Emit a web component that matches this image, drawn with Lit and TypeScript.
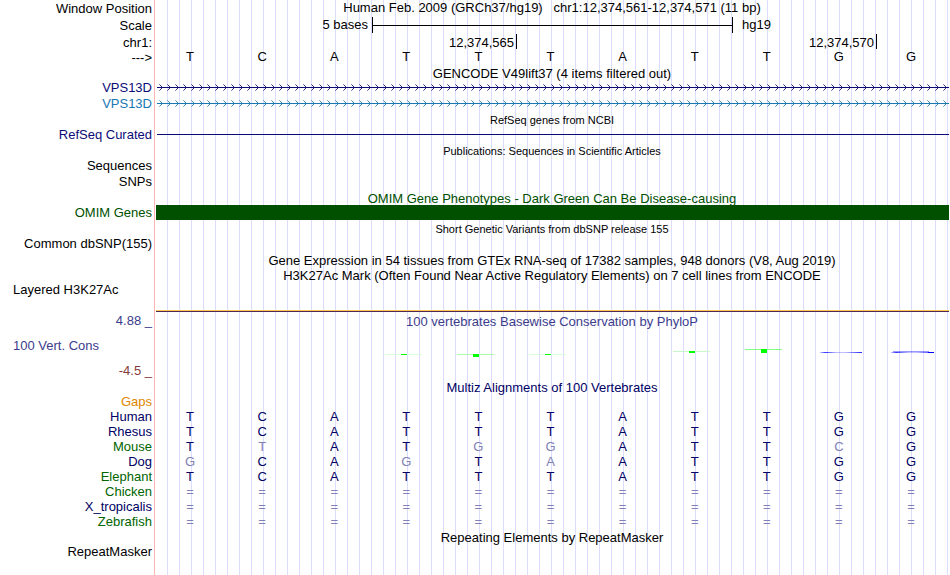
import { LitElement, html, svg, css, nothing, TemplateResult } from "lit";
import { customElement } from "lit/decorators.js";
import { classMap } from "lit/directives/class-map.js";

type Tone = "black" | "navy" | "sky" | "green" | "leaf" | "blue" | "maroon" | "orange" | "ink";

interface Species {
  name: string;
  tone: Tone;
  bases: string;
}

const HUMAN = "TCATTTATTGG";

const SPECIES: Species[] = [
  { name: "Human", tone: "ink", bases: HUMAN },
  { name: "Rhesus", tone: "ink", bases: HUMAN },
  { name: "Mouse", tone: "leaf", bases: "TTATGGATTCG" },
  { name: "Dog", tone: "ink", bases: "GCAGTAATTGG" },
  { name: "Elephant", tone: "leaf", bases: HUMAN },
  { name: "Chicken", tone: "leaf", bases: "===========" },
  { name: "X_tropicalis", tone: "ink", bases: "===========" },
  { name: "Zebrafish", tone: "leaf", bases: "===========" },
];

@customElement("app-root")
export class AppRoot extends LitElement {
  static styles = css`
    :host {
      display: block;
      font: 13px/15px "Liberation Sans", Arial, sans-serif;
      color: #000;
    }
    .browser {
      box-sizing: border-box;
      min-height: 100vh;
      padding-right: 1px;
      overflow: hidden;
      background:
        linear-gradient(#fff, #fff) 0 0 / 154px 100% no-repeat,
        linear-gradient(90deg, #ffb4b4 1px, #fff 1px) 154px 0 / 2px 100% no-repeat,
        linear-gradient(90deg, #dcdcff 1px, transparent 1px) 11px 0 / 12px 100% repeat-x,
        #fff;
    }
    .row {
      display: grid;
      grid-template-columns: 154px minmax(0, 1fr);
      height: 15px;
      white-space: pre;
    }
    .row.item { height: 16px; }
    .row.head { height: 17px; }
    .row.signal { height: 31px; }
    .row.wiggle { height: 51px; }
    .label {
      padding: 1px 2px 0 0;
      text-align: right;
    }
    .label.left {
      padding-left: 13px;
      text-align: left;
    }
    .wiggle .label { padding-top: 11px; }
    .limit {
      display: block;
      margin-top: 10px;
      text-align: right;
    }
    .title {
      padding-left: 1px;
      text-align: center;
      line-height: 19px;
    }
    .title.small {
      font-size: 11px;
      line-height: 18px;
    }
    .head .title { line-height: 15px; }
    .black { color: #000; }
    .navy { color: #0c0c78; }
    .sky { color: #1878b4; }
    .green { color: #005000; }
    .leaf { color: #006400; }
    .blue { color: #3c3c8c; }
    .maroon { color: #823c3c; }
    .orange { color: #e08600; }
    .ink { color: #000064; }
    .scale {
      display: grid;
      grid-template-columns: 1fr 361px 1fr;
      padding-left: 2px;
    }
    .scale .from {
      padding-right: 4px;
      text-align: right;
    }
    .scale .to { padding-left: 9px; }
    .ruler {
      display: flex;
      align-items: center;
      box-sizing: border-box;
      height: 16px;
      border: solid #000;
      border-width: 0 1px;
    }
    .ruler::before {
      content: "";
      flex: 1;
      height: 1px;
      background: #000;
    }
    .ticks {
      display: grid;
      grid-template-columns: 5fr 5fr 1fr;
      padding-left: 3px;
    }
    .tick {
      box-sizing: border-box;
      height: 15px;
      padding: 1px 2px 0 0;
      border-right: 1px solid #000;
      text-align: right;
    }
    .bases {
      display: grid;
      grid-template-columns: repeat(11, 1fr);
      padding: 1px 2px 0 0;
      text-align: center;
    }
    .bases.top { padding-top: 0; }
    .faint { color: #8080b4; }
    .gene {
      display: block;
      width: 100%;
      height: 16px;
      box-sizing: border-box;
      padding-left: 3px;
    }
    .rule {
      height: 1px;
      margin: 8px 0 0 3px;
      background: #0c0c78;
    }
    .bar {
      height: 15px;
      margin: 1px 0 0 2px;
      background: #005000;
    }
    .layers {
      align-self: end;
      height: 1px;
      margin-left: 2px;
      border-top: 1px solid #ffc850;
      background: #50285a;
    }
    .plot {
      display: block;
      box-sizing: border-box;
      width: 100%;
      height: 51px;
      padding-left: 1px;
    }
  `;

  private row(kind: string, label: string, tone: Tone, body: unknown = nothing) {
    return html`<div class="row ${kind}">
      <div class="label ${tone}">${label}</div>${body}</div>`;
  }

  private title(text: string, tone: Tone = "black", small = false, label: string = "", labelTone: Tone = "black") {
    return this.row("", label, labelTone,
      html`<div class=${classMap({ title: true, small, [tone]: true })}>${text}</div>`);
  }

  private bases(text: string, top = false) {
    return html`<div class=${classMap({ bases: true, top })}>${[...text].map(
      (b, i) => html`<span class=${b === HUMAN[i] ? "" : "faint"}>${b}</span>`
    )}</div>`;
  }

  private gene(id: string, color: string): TemplateResult {
    return html`<svg class="gene" aria-hidden="true" shape-rendering="crispEdges">
      <defs>
        <pattern id=${id} width="8" height="16" patternUnits="userSpaceOnUse">
          ${svg`<path fill=${color} opacity="0.85" d="M3 6h1v1h-1zM4 7h1v1h-1zM5 8h1v1h-1zM4 9h1v1h-1zM3 10h1v1h-1z"/>
          <path fill=${color} opacity="0.5" d="M2 5h1v1h-1zM2 11h1v1h-1z"/>`}
        </pattern>
      </defs>
      <rect width="100%" height="16" fill="url(#${id})"></rect>
      <rect y="8" width="100%" height="1" fill=${color}></rect>
    </svg>`;
  }

  private plot() {
    const peaks = [
      { x: 230, y: 27, h: 1, line: "#d8ffd8" },
      { x: 302, y: 27, h: 3, line: "#a8ffa8" },
      { x: 374, y: 27, h: 1, line: "#d8ffd8" },
      { x: 518, y: 24, h: 2, line: "#c8f8c8" },
      { x: 590, y: 22, h: 4, line: "#80ff80" },
    ];
    return html`<svg class="plot" viewBox="0 0 794 51" preserveAspectRatio="none"
      role="img" aria-label="PhyloP scores" shape-rendering="crispEdges">
      <defs>
        <linearGradient id="fade">
          <stop offset="0" stop-color="#0000ff" stop-opacity="0.2"></stop>
          <stop offset="0.12" stop-color="#0000ff" stop-opacity="0.8"></stop>
          <stop offset="0.4" stop-color="#0000ff" stop-opacity="0.25"></stop>
          <stop offset="0.6" stop-color="#0000ff" stop-opacity="0.25"></stop>
          <stop offset="1" stop-color="#0000ff" stop-opacity="0.85"></stop>
        </linearGradient>
      </defs>
      ${peaks.map((p) => svg`
        <rect x=${p.x} y=${p.y} width="37" height="1" fill=${p.line}></rect>
        <rect x=${p.x + 16} y=${p.y} width="6" height=${p.h} fill="#00ff00"></rect>`)}
      <rect x="665" y="25" width="42" height="1" fill="url(#fade)"></rect>
      <rect x="736" y="25" width="43" height="1" fill="url(#fade)"></rect>
      <rect x="738" y="24" width="36" height="1" fill="#0000ff" opacity="0.4"></rect>
      <rect x="773" y="25" width="6" height="1" fill="#0000ff"></rect>
    </svg>`;
  }

  render() {
    return html`<main class="browser">
      ${this.row("head", "Window Position", "black",
        html`<div class="title">Human Feb. 2009 (GRCh37/hg19)   chr1:12,374,561-12,374,571 (11 bp)</div>`)}
      ${this.row("head", "Scale", "black",
        html`<div class="scale"><span class="from">5 bases</span><span class="ruler"></span><span class="to">hg19</span></div>`)}
      ${this.row("", "chr1:", "black",
        html`<div class="ticks"><span class="tick">12,374,565</span><span class="tick">12,374,570</span></div>`)}
      ${this.row("", "--->", "black", this.bases(HUMAN, true))}
      ${this.title("GENCODE V49lift37 (4 items filtered out)")}
      ${this.row("item", "VPS13D", "navy", this.gene("coding", "#0c0c78"))}
      ${this.row("item", "VPS13D", "sky", this.gene("alternate", "#1878b4"))}
      ${this.title("RefSeq genes from NCBI", "black", true)}
      ${this.row("item", "RefSeq Curated", "navy", html`<div class="rule"></div>`)}
      ${this.title("Publications: Sequences in Scientific Articles", "black", true)}
      ${this.row("item", "Sequences", "black")}
      ${this.row("item", "SNPs", "black")}
      ${this.title("OMIM Gene Phenotypes - Dark Green Can Be Disease-causing", "green")}
      ${this.row("item", "OMIM Genes", "green", html`<div class="bar"></div>`)}
      ${this.title("Short Genetic Variants from dbSNP release 155", "black", true)}
      ${this.row("item", "Common dbSNP(155)", "black")}
      ${this.title("Gene Expression in 54 tissues from GTEx RNA-seq of 17382 samples, 948 donors (V8, Aug 2019)")}
      ${this.title("H3K27Ac Mark (Often Found Near Active Regulatory Elements) on 7 cell lines from ENCODE")}
      <div class="row signal">
        <div class="label left">Layered H3K27Ac</div>
        <div class="layers"></div>
      </div>
      ${this.title("100 vertebrates Basewise Conservation by PhyloP", "blue", false, "4.88 _", "blue")}
      <div class="row wiggle">
        <div class="label left blue">100 Vert. Cons<span class="limit maroon">-4.5 _</span></div>
        ${this.plot()}
      </div>
      ${this.title("Multiz Alignments of 100 Vertebrates", "ink")}
      ${this.row("", "Gaps", "orange")}
      ${SPECIES.map((s) => html`<div class="row ink">
        <div class="label ${s.tone}">${s.name}</div>${this.bases(s.bases)}</div>`)}
      ${this.title("Repeating Elements by RepeatMasker")}
      ${this.row("item", "RepeatMasker", "black")}
    </main>`;
  }
}
